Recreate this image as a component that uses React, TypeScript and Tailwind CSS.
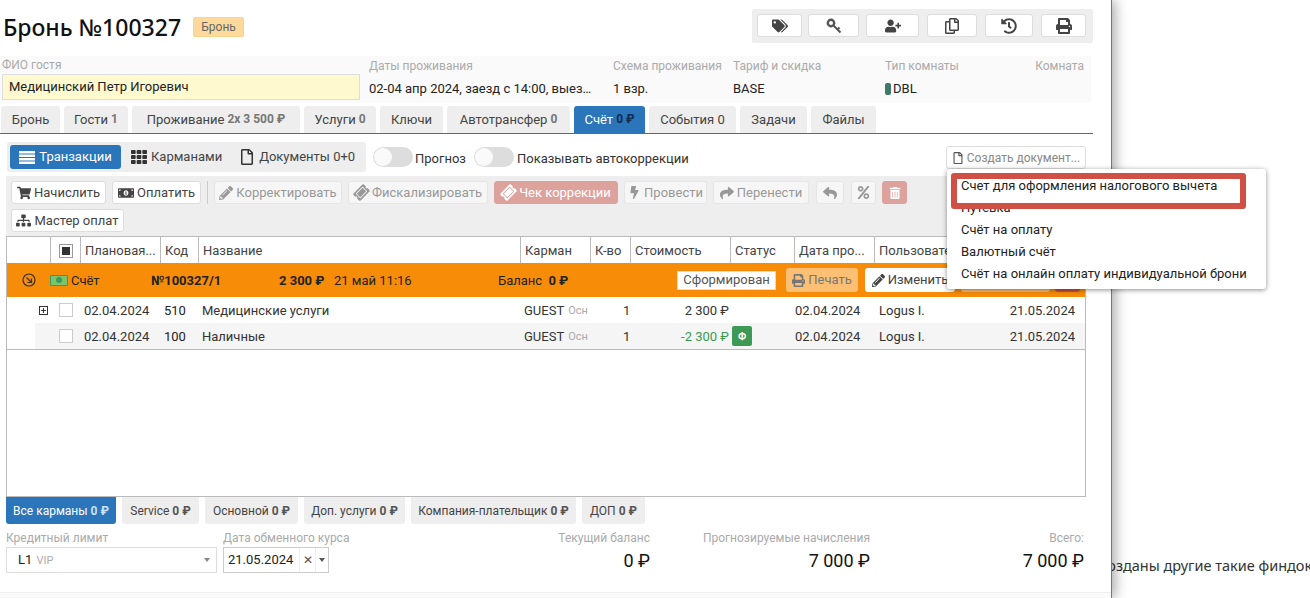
import {
  FaTags, FaUserPlus, FaRegCopy, FaHistory, FaPrint, FaTh, FaRegFile,
  FaShoppingCart, FaMoneyBillAlt, FaPencilAlt, FaTicketAlt, FaBolt, FaShare, FaReply,
  FaPercent, FaTrashAlt, FaSitemap,
} from 'react-icons/fa';
import type { ReactNode } from 'react';

function ToolBtn({ children, className = '', danger }: { children: ReactNode; className?: string; danger?: boolean }) {
  return (
    <div
      className={`flex h-[23px] shrink-0 items-center justify-center gap-[3px] whitespace-nowrap rounded-[3px] border ${
        danger ? 'border-[#dea29c] bg-[#dea29c] text-white' : 'border-[#ddd] bg-white text-[#444]'
      } ${className}`}
    >
      {children}
    </div>
  );
}

function Toggle() {
  return (
    <div className="flex h-[20px] w-[40px] shrink-0 items-center rounded-full bg-[#ddd] pl-[1px]">
      <div className="h-[18px] w-[18px] rounded-full bg-[#fafafa]" />
    </div>
  );
}

function HeadCell({ children, className = '' }: { children?: ReactNode; className?: string }) {
  return (
    <div className={`flex h-full shrink-0 items-center overflow-hidden whitespace-nowrap border-r border-[#bbb] pl-[4px] pt-[2px] ${className}`}>
      {children}
    </div>
  );
}

function Row({ date, code, name, amount, shade, green }: { date: string; code: string; name: string; amount: string; shade?: boolean; green?: boolean }) {
  return (
    <div className="flex h-[26px] items-center text-[#333]">
      <div className="h-full w-[28px] shrink-0" />
      <div className={`flex h-full flex-1 items-center ${shade ? 'bg-[#f5f5f5]' : ''}`}>
        <div className="flex w-[49px] shrink-0 items-center pl-[4px]">
          <div className={`flex h-[9px] w-[9px] items-center justify-center border border-[#333] ${shade ? 'invisible' : ''}`}>
            <div className="relative h-[5px] w-[5px]">
              <div className="absolute left-0 top-[2px] h-[1px] w-[5px] bg-[#333]" />
              <div className="absolute left-[2px] top-0 h-[5px] w-[1px] bg-[#333]" />
            </div>
          </div>
          <div className="ml-[11px] h-[14px] w-[14px] border border-[#ccc] bg-white" />
        </div>
        <div className="w-[80px] shrink-0 pt-[2px]">{date}</div>
        <div className="w-[38px] shrink-0 pt-[2px] text-[#222]">{code}</div>
        <div className="w-[322px] shrink-0 pt-[2px]">{name}</div>
        <div className="flex w-[70px] shrink-0 items-center gap-[4px] pt-[2px]">
          GUEST <span className="w-[20px] overflow-hidden whitespace-nowrap text-[11px] text-[#aaa]">Осн</span>
        </div>
        <div className="w-[40px] shrink-0 pl-[29px] pt-[2px]">1</div>
        <div className={`w-[96px] shrink-0 pr-[1px] pt-[2px] text-right ${green ? 'text-[#3a9a50]' : ''}`}>{amount}</div>
        <div className="w-[65px] shrink-0 pl-[2px]">
          {green && <div className="flex h-[20px] w-[20px] items-center justify-center rounded-[2px] bg-[#3d9a54] text-[10px] font-bold text-white">Ф</div>}
        </div>
        <div className="w-[84px] shrink-0 pt-[2px]">{date}</div>
        <div className="w-[100px] shrink-0 pt-[2px]">Logus I.</div>
        <div className="flex-1 pr-[10px] pt-[2px] text-right">21.05.2024</div>
      </div>
    </div>
  );
}

export default function App() {
  const tabs = [
    { label: 'Бронь', w: 'w-[59px]' },
    { label: 'Гости', extra: '1', w: 'w-[64px]' },
    { label: 'Проживание', extra: '2x 3 500 ₽', w: 'w-[168px]' },
    { label: 'Услуги', extra: '0', w: 'w-[72px]' },
    { label: 'Ключи', w: 'w-[63px]' },
    { label: 'Автотрансфер', extra: '0', w: 'w-[123px]' },
    { label: 'Счёт', extra: '0 ₽', w: 'w-[71px]', active: true },
    { label: 'События 0', w: 'w-[87px]' },
    { label: 'Задачи', w: 'w-[67px]' },
    { label: 'Файлы', w: 'w-[65px]' },
  ];
  const pockets = [
    { label: 'Все карманы', w: 'w-[110px]', active: true },
    { label: 'Service', w: 'w-[77px]' },
    { label: 'Основной', w: 'w-[93px]' },
    { label: 'Доп. услуги', w: 'w-[101px]' },
    { label: 'Компания-плательщик', w: 'w-[165px]' },
    { label: 'ДОП', w: 'w-[63px]' },
  ];

  return (
    <div className="relative h-[598px] w-[1310px] overflow-hidden bg-white font-['Roboto','Noto_Sans',sans-serif] text-[13px] text-[#222]">
      {/* text of the page behind the panel */}
      <div className="absolute left-[1098px] top-[555px] whitespace-nowrap font-['Noto_Sans',sans-serif] text-[14.5px] text-[#333]">
        Созданы другие такие финдокументы
      </div>

      <div className="relative h-[598px] w-[1112px] border-r border-[#777] bg-white shadow-[3px_0_12px_rgba(0,0,0,0.35)]">
        {/* header */}
        <div className="flex h-[56px] items-start pr-[18px]">
          <div className="mt-[11px] whitespace-nowrap pl-[3px] font-['Noto_Sans',sans-serif] text-[23px] font-medium leading-[32px] text-[#111]">
            Бронь №100327
          </div>
          <div className="ml-[12px] mt-[17px] flex h-[20px] w-[51px] items-center justify-center rounded-[2px] border border-[#fbd38d] bg-[#fdd99b] text-[12px] text-[#666]">
            Бронь
          </div>
          <div className="ml-auto mt-[9px] flex h-[34px] w-[341px] items-center rounded-[2px] bg-[#eee] pb-[1px] pl-[5px] text-[16px] text-[#555]">
            <ToolBtn className="w-[45px]"><FaTags /></ToolBtn>
            <ToolBtn className="ml-[6px] w-[51px]">
              <svg width="16" height="16" viewBox="0 0 16 16" fill="none" stroke="#555">
                <circle cx="5" cy="5" r="3.2" strokeWidth="2.4" />
                <path d="M7.5 7.5 14.5 14.5M11.5 11.5 13.5 9.5" strokeWidth="2" />
              </svg>
            </ToolBtn>
            <ToolBtn className="ml-[7px] w-[53px]"><FaUserPlus /></ToolBtn>
            <ToolBtn className="ml-[8px] w-[50px]"><FaRegCopy /></ToolBtn>
            <ToolBtn className="ml-[8px] w-[48px]"><FaHistory /></ToolBtn>
            <ToolBtn className="ml-[8px] w-[45px]"><FaPrint /></ToolBtn>
          </div>
        </div>

        {/* guest info */}
        <div className="flex h-[47px] w-[1091px] bg-[#fafafa] pl-[2px] text-[#222]">
          <div className="w-[367px] shrink-0">
            <div className="text-[12px] leading-[18px] text-[#aaa]">ФИО гостя</div>
            <div className="flex h-[26px] w-[358px] items-center border border-[#ddd] bg-[#fef9cf] pl-[6px]">Медицинский Петр Игоревич</div>
          </div>
          <div className="w-[244px] shrink-0 pt-[1px]">
            <div className="text-[12px] leading-[18px] text-[#aaa]">Даты проживания</div>
            <div className="mt-[2px] w-[230px] overflow-hidden text-ellipsis whitespace-nowrap leading-[24px]">02-04 апр 2024, заезд с 14:00, выезд до 12:00</div>
          </div>
          <div className="w-[120px] shrink-0 pt-[1px]">
            <div className="whitespace-nowrap text-[12px] leading-[18px] text-[#aaa]">Схема проживания</div>
            <div className="mt-[2px] leading-[24px]">1 взр.</div>
          </div>
          <div className="w-[152px] shrink-0 pt-[1px]">
            <div className="text-[12px] leading-[18px] text-[#aaa]">Тариф и скидка</div>
            <div className="mt-[2px] leading-[24px]">BASE</div>
          </div>
          <div className="flex-1 pt-[1px]">
            <div className="text-[12px] leading-[18px] text-[#aaa]">Тип комнаты</div>
            <div className="mt-[2px] flex items-center gap-[2px] leading-[24px]">
              <span className="h-[12px] w-[6px] rounded-[2px] bg-[#3d7a68]" />DBL
            </div>
          </div>
          <div className="pr-[7px] pt-[1px] text-right text-[12px] leading-[18px] text-[#aaa]">Комната</div>
        </div>

        {/* tabs */}
        <div className="mt-[3px] flex h-[28px] w-[1093px] gap-[4px] border-b border-[#2b76ba] pl-[1px]">
          {tabs.map((t) => (
            <div
              key={t.label}
              className={`flex h-[27px] items-center justify-center gap-[3px] whitespace-nowrap rounded-t-[3px] ${t.w} ${t.active ? 'bg-[#2b76ba] text-white' : 'bg-[#eee] text-[#444]'}`}
            >
              {t.label}
              {t.extra && <span className={`mb-[2px] text-[12px] font-bold ${t.active ? 'text-[#0d2c4f]' : 'text-[#777]'}`}>{t.extra}</span>}
            </div>
          ))}
        </div>

        {/* view switch */}
        <div className="flex h-[42px] w-[1093px] items-start pl-[7px] pr-[7px] pt-[8px]">
          <div className="flex h-[30px] w-[359px] shrink-0 items-center rounded-[3px] bg-[#eee] px-[3px] text-[#444]">
            <div className="flex h-[24px] w-[111px] items-center justify-center gap-[4px] rounded-[3px] bg-[#2b76ba] text-white">
              <svg width="16" height="13" viewBox="0 0 16 13" fill="white">
                <rect y="0" width="16" height="2.5" />
                <rect y="3.5" width="16" height="2.5" />
                <rect y="7" width="16" height="2.5" />
                <rect y="10.5" width="16" height="2.5" />
              </svg>
              Транзакции
            </div>
            <div className="ml-[10px] flex items-center gap-[4px]"><FaTh className="text-[16px] text-[#333]" />Карманами</div>
            <div className="ml-[17px] flex items-center gap-[4px] whitespace-nowrap"><FaRegFile className="text-[16px] text-[#333]" />Документы 0+0</div>
          </div>
          <div className="ml-[7px] mt-[5px]"><Toggle /></div>
          <span className="ml-[2px] mt-[7px] text-[#333]">Прогноз</span>
          <div className="ml-[8px] mt-[5px]"><Toggle /></div>
          <span className="ml-[3px] mt-[7px] text-[#333]">Показывать автокоррекции</span>
          <div className="ml-auto mt-[4px] flex h-[23px] w-[140px] items-center justify-center gap-[3px] rounded-[3px] border border-[#ddd] bg-white text-[12px] text-[#888]">
            <FaRegFile className="text-[12px] text-[#555]" />Создать документ...
          </div>
        </div>

        {/* transaction toolbar */}
        <div className="ml-[6px] h-[60px] w-[1087px] bg-[#eee] pl-[5px] pt-[5px]">
          <div className="flex items-center gap-[6px]">
            <ToolBtn className="w-[95px]"><FaShoppingCart className="text-[14px]" />Начислить</ToolBtn>
            <ToolBtn className="w-[89px]"><FaMoneyBillAlt className="text-[16px]" />Оплатить</ToolBtn>
            <div className="h-[23px] w-[1px] bg-[#ccc]" />
            <ToolBtn className="w-[128px] opacity-50"><FaPencilAlt className="text-[14px]" />Корректировать</ToolBtn>
            <ToolBtn className="w-[140px] opacity-50"><FaTicketAlt className="-rotate-45 text-[15px]" />Фискализировать</ToolBtn>
            <ToolBtn className="w-[124px]" danger><FaTicketAlt className="-rotate-45 text-[15px]" />Чек коррекции</ToolBtn>
            <ToolBtn className="w-[83px] opacity-50"><FaBolt className="text-[13px]" />Провести</ToolBtn>
            <ToolBtn className="w-[96px] opacity-50"><FaShare className="text-[14px]" />Перенести</ToolBtn>
            <ToolBtn className="ml-[1px] w-[28px] opacity-50"><FaReply className="text-[14px]" /></ToolBtn>
            <ToolBtn className="ml-[1px] w-[25px] opacity-50"><FaPercent className="text-[13px]" /></ToolBtn>
            <ToolBtn className="w-[25px]" danger><FaTrashAlt className="text-[12px]" /></ToolBtn>
          </div>
          <div className="mt-[5px] flex">
            <ToolBtn className="w-[113px]"><FaSitemap className="text-[15px]" />Мастер оплат</ToolBtn>
          </div>
        </div>

        {/* table */}
        <div className="ml-[6px] h-[261px] w-[1080px] overflow-hidden border border-[#bbb] bg-white">
          <div className="flex h-[26px] items-center text-[#444]">
            <HeadCell className="w-[44px]" />
            <HeadCell className="w-[30px] !pl-[8px]">
              <div className="flex h-[14px] w-[14px] items-center justify-center border border-[#999]"><div className="h-[8px] w-[8px] bg-[#333]" /></div>
            </HeadCell>
            <HeadCell className="w-[80px]">Плановая...</HeadCell>
            <HeadCell className="w-[38px]">Код</HeadCell>
            <HeadCell className="w-[322px]">Название</HeadCell>
            <HeadCell className="w-[70px]">Карман</HeadCell>
            <HeadCell className="w-[40px]">К-во</HeadCell>
            <HeadCell className="w-[100px]">Стоимость</HeadCell>
            <HeadCell className="w-[64px]">Статус</HeadCell>
            <HeadCell className="w-[80px]">Дата про...</HeadCell>
            <div className="whitespace-nowrap pl-[4px] pt-[2px]">Пользователь</div>
          </div>

          <div className="flex h-[34px] items-center bg-[#f78c08] text-[#222]">
            <div className="flex w-[43px] shrink-0 justify-center">
              <svg width="14" height="14" viewBox="0 0 14 14" fill="none" stroke="#333" strokeWidth="1.2">
                <circle cx="7" cy="7" r="6" />
                <path d="M4.5 4.5 9.5 9.5M9.5 5.5V9.5H5.5" />
              </svg>
            </div>
            <div className="flex w-[101px] shrink-0 items-center gap-[3px] pt-[2px]">
              <div className="mb-[2px] flex h-[11px] w-[18px] items-center justify-center rounded-[1px] border border-[#3d9a54] bg-[#7ac46d]">
                <div className="h-[6px] w-[6px] rounded-full bg-[#3d9a54]" />
              </div>
              Счёт
            </div>
            <div className="w-[128px] shrink-0 pt-[2px] font-bold">№100327/1</div>
            <div className="w-[55px] shrink-0 whitespace-nowrap pt-[2px] font-bold">2 300 ₽</div>
            <div className="w-[164px] shrink-0 whitespace-nowrap pt-[2px]">21 май 11:16</div>
            <div className="w-[179px] shrink-0 whitespace-nowrap pt-[2px]">Баланс <span className="ml-[3px] font-bold">0 ₽</span></div>
            <div className="flex h-[19px] w-[99px] shrink-0 items-center justify-center border border-[#ddd] bg-white text-[#555]">Сформирован</div>
            <div className="ml-[10px] flex h-[24px] w-[72px] shrink-0 items-center justify-center gap-[3px] rounded-[3px] bg-[#fcbf73] text-[#777]"><FaPrint className="text-[13px]" />Печать</div>
            <div className="ml-[7px] flex h-[24px] w-[90px] shrink-0 items-center justify-center gap-[3px] rounded-[3px] bg-white text-[#444]"><FaPencilAlt className="text-[13px]" />Изменить</div>
            <div className="ml-[6px] h-[24px] w-[89px] shrink-0 rounded-[3px] bg-[#fcbf73]" />
            <div className="ml-[5px] h-[24px] w-[25px] shrink-0 rounded-[3px] bg-[#c9503f]" />
          </div>

          <Row date="02.04.2024" code="510" name="Медицинские услуги" amount="2 300 ₽" />
          <Row date="02.04.2024" code="100" name="Наличные" amount="-2 300 ₽" shade green />
          <div className="h-[1px] bg-[#bbb]" />
        </div>

        {/* pockets */}
        <div className="ml-[6px] flex h-[27px] gap-[6px] text-[12px]">
          {pockets.map((p) => (
            <div
              key={p.label}
              className={`flex items-center justify-center gap-[3px] whitespace-nowrap rounded-b-[3px] ${p.w} ${p.active ? 'bg-[#2b76ba] text-white' : 'bg-[#eee] text-[#444]'}`}
            >
              {p.label} <span className={`font-bold ${p.active ? 'text-[#cfe0f0]' : 'text-[#555]'}`}>0 ₽</span>
            </div>
          ))}
        </div>

        {/* footer */}
        <div className="ml-[6px] mt-[5px] flex h-[63px] w-[1078px] items-start">
          <div className="w-[217px] shrink-0">
            <div className="text-[12px] leading-[18px] text-[#aaa]">Кредитный лимит</div>
            <div className="flex h-[26px] w-[211px] items-center justify-between border border-[#ddd] pl-[11px] pr-[6px]">
              <span>L1 <span className="ml-[1px] text-[11px] text-[#aaa]">VIP</span></span>
              <span className="h-0 w-0 border-x-[3px] border-t-[4px] border-x-transparent border-t-[#888]" />
            </div>
          </div>
          <div className="w-[322px] shrink-0">
            <div className="text-[12px] leading-[18px] text-[#aaa]">Дата обменного курса</div>
            <div className="flex h-[26px] w-[106px] items-center border border-[#ccc]">
              <span className="pl-[4px]">21.05.2024</span>
              <span className="ml-auto flex h-full w-[17px] items-center justify-center border-x border-[#eee] text-[12px] text-[#555]">✕</span>
              <span className="flex w-[12px] justify-center"><span className="h-0 w-0 border-x-[3px] border-t-[4px] border-x-transparent border-t-[#555]" /></span>
            </div>
          </div>
          <div className="w-[105px] shrink-0 text-right">
            <div className="whitespace-nowrap text-[12px] leading-[18px] text-[#aaa]">Текущий баланс</div>
            <div className="mt-[1px] text-[18px] leading-[26px] text-[#111]">0 ₽</div>
          </div>
          <div className="w-[220px] shrink-0 text-right">
            <div className="whitespace-nowrap text-[12px] leading-[18px] text-[#aaa]">Прогнозируемые начисления</div>
            <div className="mt-[1px] text-[18px] leading-[26px] text-[#111]">7 000 ₽</div>
          </div>
          <div className="flex-1 text-right">
            <div className="text-[12px] leading-[18px] text-[#aaa]">Всего:</div>
            <div className="mt-[1px] text-[18px] leading-[26px] text-[#111]">7 000 ₽</div>
          </div>
        </div>

        <div className="h-[6px] border-t border-[#eee] bg-[#fafafa]" />
      </div>

      {/* open dropdown */}
      <div className="absolute left-[947px] top-[169px] w-[319px] rounded-[3px] bg-white pb-[4px] pt-[6px] text-[#222] shadow-[0_1px_5px_rgba(0,0,0,0.45)]">
        {['Счет для оформления налогового вычета', 'Путевка', 'Счёт на оплату', 'Валютный счёт', 'Счёт на онлайн оплату индивидуальной брони'].map((item) => (
          <div key={item} className="h-[22px] whitespace-nowrap pl-[14px] leading-[22px]">{item}</div>
        ))}
      </div>
      {/* red annotation frame */}
      <div className="absolute left-[951px] top-[173px] h-[36px] w-[295px] rounded-[3px] border-[6px] border-[#d05045]" />
    </div>
  );
}
